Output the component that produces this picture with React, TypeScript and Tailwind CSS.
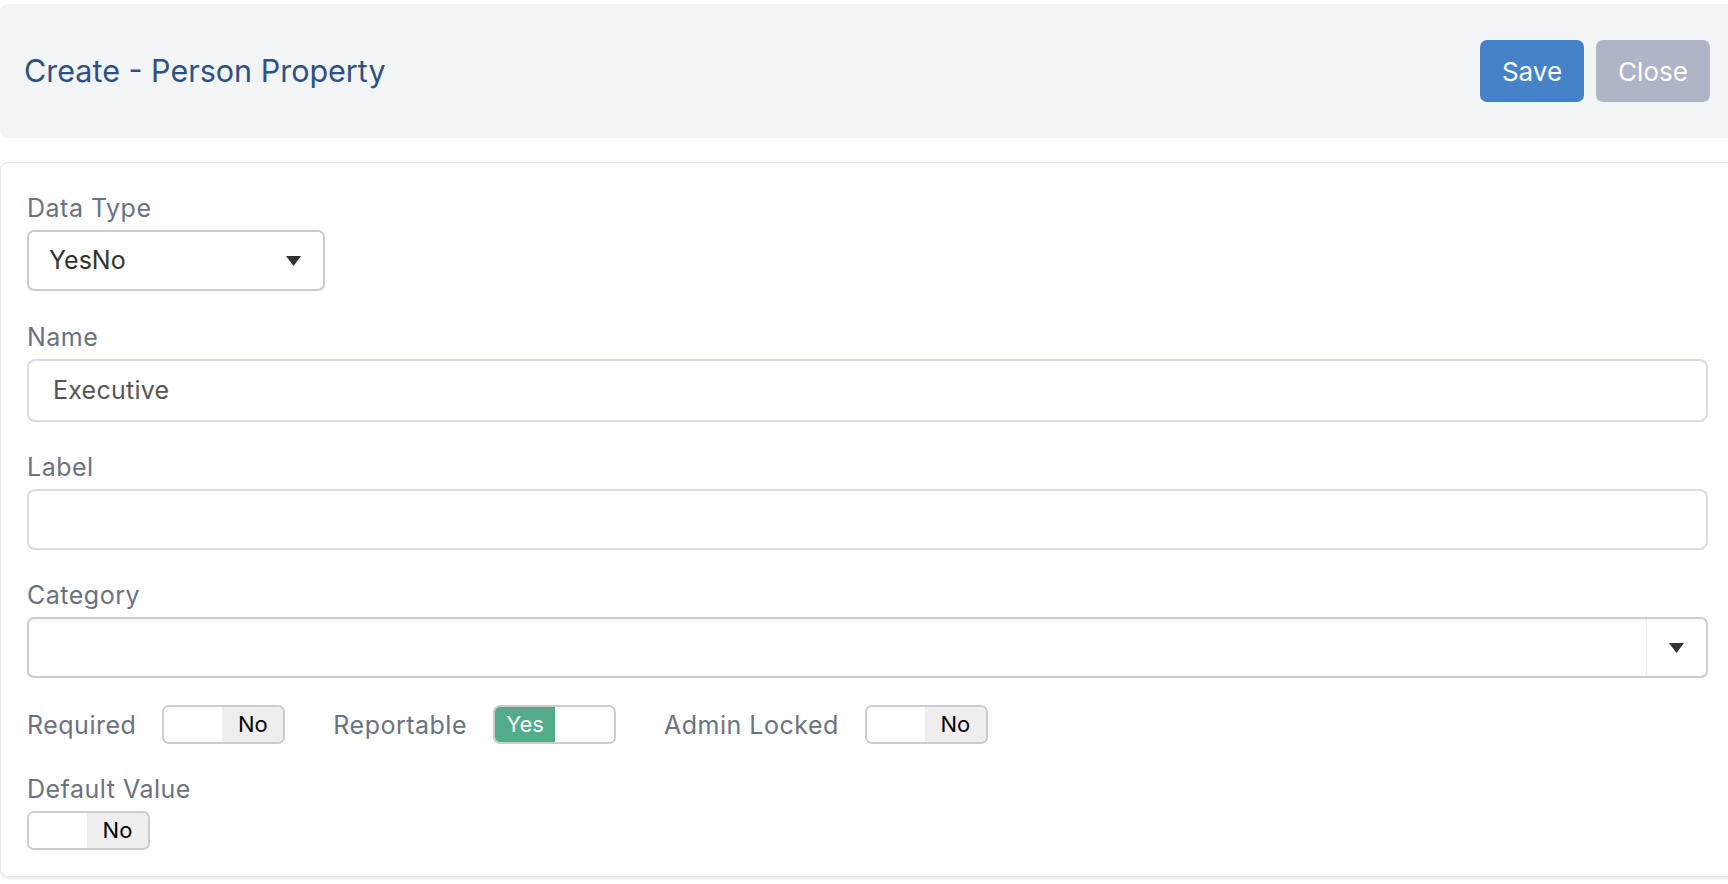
import React from 'react';

function Caret() {
  return (
    <svg width="15" height="10" viewBox="0 0 15 10" className="shrink-0">
      <path d="M0 0 H15 L7.5 10 Z" fill="#333333" />
    </svg>
  );
}

function FieldLabel({ children }: { children: React.ReactNode }) {
  return (
    <div className="text-[25px] leading-[32px] tracking-[0.02em] text-[#6b7280] mb-[6px]">
      {children}
    </div>
  );
}

function Toggle({ on }: { on: boolean }) {
  return (
    <div className="w-[123px] h-[39px] border-2 border-[#cccccc] rounded-[7px] overflow-hidden flex text-[22px]">
      {on ? (
        <>
          <div className="w-[60px] bg-[#52ac87] text-white flex items-center justify-center">Yes</div>
          <div className="flex-1 bg-white" />
        </>
      ) : (
        <>
          <div className="flex-1 bg-white" />
          <div className="w-[61px] bg-[#eeeeee] text-black flex items-center justify-center">No</div>
        </>
      )}
    </div>
  );
}

function InlineToggle({ label, on }: { label: string; on: boolean }) {
  return (
    <div className="flex items-center gap-[26px]">
      <span className="text-[25px] leading-[32px] tracking-[0.02em] text-[#6b7280]">{label}</span>
      <Toggle on={on} />
    </div>
  );
}

export default function App() {
  return (
    <div className="w-[1728px] h-[884px] overflow-hidden bg-white pt-[4px] font-['Inter',_'Noto_Sans',_sans-serif]">
      <header className="w-[1736px] h-[134px] bg-[#f3f4f6] rounded-[8px] flex items-center justify-between pl-[24px] pr-[26px]">
        <h1 className="text-[30.5px] leading-[36px] text-[#2d5183]">Create - Person Property</h1>
        <div className="flex gap-[12px]">
          <button className="w-[104px] h-[62px] rounded-[7px] bg-[#4682c8] text-white text-[26px]">Save</button>
          <button className="w-[114px] h-[62px] rounded-[7px] bg-[#afb4c7] text-white text-[26px]">Close</button>
        </div>
      </header>

      <div className="mt-[24px] w-[1736px] border border-[#e4e7ec] rounded-[8px] shadow-[0_2px_3px_rgba(0,0,0,0.08)] pl-[26px] pr-[27px] pt-[29px] pb-[26px] flex flex-col gap-[29px]">
        <div>
          <FieldLabel>Data Type</FieldLabel>
          <div className="w-[298px] h-[61px] border-2 border-[#cccccc] rounded-[7px] pl-[20px] pr-[22px] flex items-center justify-between">
            <span className="text-[25px] text-[#333333]">YesNo</span>
            <Caret />
          </div>
        </div>

        <div className="mt-[1px]">
          <FieldLabel>Name</FieldLabel>
          <div className="h-[63px] border-2 border-[#d9dce3] rounded-[8px] pl-[24px] flex items-center">
            <span className="text-[25px] tracking-[0.01em] text-[#555555]">Executive</span>
          </div>
        </div>

        <div>
          <FieldLabel>Label</FieldLabel>
          <div className="h-[61px] border-2 border-[#d9dce3] rounded-[8px]" />
        </div>

        <div>
          <FieldLabel>Category</FieldLabel>
          <div className="h-[61px] border-2 border-[#cccccc] rounded-[7px] flex overflow-hidden">
            <div className="flex-1 shadow-[inset_0_3px_3px_rgba(0,0,0,0.03)]" />
            <div className="w-[60px] border-l border-[#efefef] flex items-center justify-center">
              <Caret />
            </div>
          </div>
        </div>

        <div className="flex items-center gap-[48px] -mt-[2px]">
          <InlineToggle label="Required" on={false} />
          <InlineToggle label="Reportable" on={true} />
          <InlineToggle label="Admin Locked" on={false} />
        </div>

        <div>
          <FieldLabel>Default Value</FieldLabel>
          <div className="mt-[2px]">
            <Toggle on={false} />
          </div>
        </div>
      </div>
    </div>
  );
}
